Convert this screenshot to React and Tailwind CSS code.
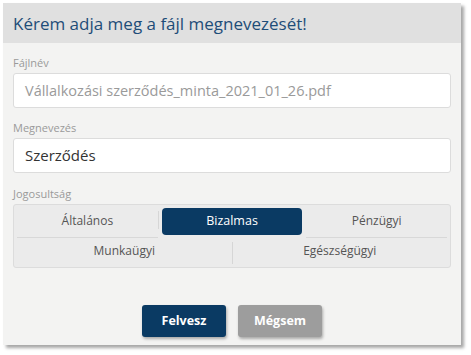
import React from "react";

export default function App() {
  const font = { fontFamily: '"Open Sans", "Noto Sans", sans-serif' };
  return (
    <div className="w-[471px] h-[355px] bg-white pt-[3px] pl-[3px]" style={font}>
      <div className="w-[458px] h-[342px] flex flex-col bg-[#f3f3f2] shadow-[3px_3px_3px_rgba(0,0,0,0.35)]">
        <div className="h-[40px] shrink-0 bg-[#e0e0e0] flex items-center px-[10px]">
          <span className="text-[17px] text-[#1e4d78] leading-none">Kérem adja meg a fájl megnevezését!</span>
        </div>
        <div className="flex-1 flex flex-col px-[10px] pt-[13px]">
          <div className="text-[11px] leading-[14px] text-[#9a9a9a] mb-[3px]">Fájlnév</div>
          <div className="h-[35px] bg-white border border-[#dcdcdc] rounded-[3px] flex items-center px-[11px]">
            <span className="text-[14.5px] text-[#9a9a9a]">Vállalkozási szerződés_minta_2021_01_26.pdf</span>
          </div>
          <div className="text-[11px] leading-[14px] text-[#9a9a9a] mb-[3px] mt-[13px]">Megnevezés</div>
          <div className="h-[35px] bg-white border border-[#dcdcdc] rounded-[3px] flex items-center px-[11px]">
            <span className="text-[15px] text-[#333]">Szerződés</span>
          </div>
          <div className="text-[11px] leading-[14px] text-[#9a9a9a] mb-[3px] mt-[14px]">Jogosultság</div>
          <div className="h-[64px] bg-[#ebebeb] border border-[#dcdcdc] rounded-[3px] p-[3px] flex flex-col">
            <div className="h-[30px] flex">
              <div className="flex-1 border-b border-[#d8d8d8] flex items-center justify-center text-[12px] text-[#555] pb-[3px]">Általános</div>
              <div className="w-[4px] flex items-start pt-[3px]">
                <div className="w-px h-[18px] bg-[#d6d6d6]"></div>
              </div>
              <div className="flex-1 h-[27px] bg-[#0a3a63] rounded-[4px] flex items-center justify-center text-[12.5px] text-white">Bizalmas</div>
              <div className="w-[4px]"></div>
              <div className="flex-1 border-b border-[#d8d8d8] flex items-center justify-center text-[12px] text-[#555] pb-[3px]">Pénzügyi</div>
            </div>
            <div className="flex-1 flex">
              <div className="flex-1 flex items-center justify-center text-[12px] text-[#555]">Munkaügyi</div>
              <div className="w-px h-[22px] self-end bg-[#d6d6d6]"></div>
              <div className="flex-1 flex items-center justify-center text-[12px] text-[#555]">Egészségügyi</div>
            </div>
          </div>
          <div className="mt-[37px] flex justify-center gap-[12px]">
            <div className="w-[84px] h-[32px] bg-[#0a3a63] rounded-[3px] shadow-[1px_2px_3px_rgba(0,0,0,0.3)] flex items-center justify-center text-[12.5px] font-bold text-white">Felvesz</div>
            <div className="w-[84px] h-[32px] bg-[#9d9d9d] rounded-[3px] shadow-[1px_2px_3px_rgba(0,0,0,0.3)] flex items-center justify-center text-[12.5px] font-bold text-white">Mégsem</div>
          </div>
        </div>
      </div>
    </div>
  );
}
